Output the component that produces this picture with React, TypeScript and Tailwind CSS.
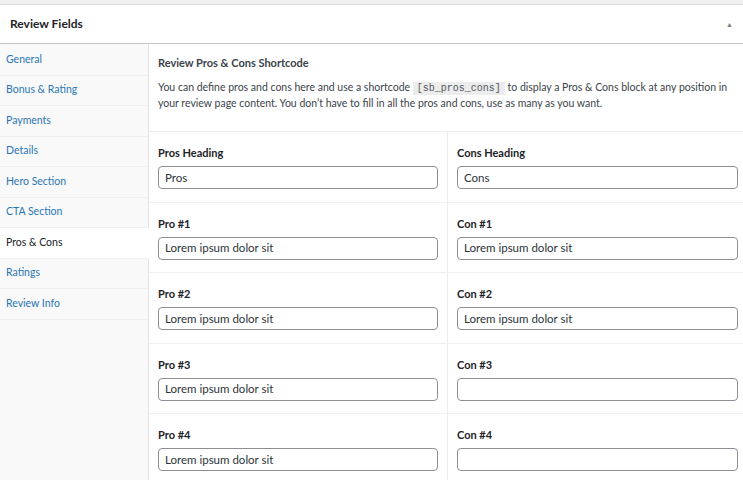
import React from "react";

const tabs = [
  "General",
  "Bonus & Rating",
  "Payments",
  "Details",
  "Hero Section",
  "CTA Section",
  "Pros & Cons",
  "Ratings",
  "Review Info",
];

const rows: { l: string; lv: string; r: string; rv: string }[] = [
  { l: "Pros Heading", lv: "Pros", r: "Cons Heading", rv: "Cons" },
  { l: "Pro #1", lv: "Lorem ipsum dolor sit", r: "Con #1", rv: "Lorem ipsum dolor sit" },
  { l: "Pro #2", lv: "Lorem ipsum dolor sit", r: "Con #2", rv: "Lorem ipsum dolor sit" },
  { l: "Pro #3", lv: "Lorem ipsum dolor sit", r: "Con #3", rv: "" },
  { l: "Pro #4", lv: "Lorem ipsum dolor sit", r: "Con #4", rv: "" },
];

function Field({ label, value, right }: { label: string; value: string; right?: boolean }) {
  return (
    <div
      className={
        "w-1/2 px-[9px] pt-[14px] pb-[12.5px] " + (right ? "" : "border-r border-[#ececec]")
      }
    >
      <div className="text-[11px] leading-[13px] font-bold text-[#1d2327]">{label}</div>
      <div className="mt-[7px] h-[23px] rounded-[4px] border border-[#8c8f94] bg-white px-[6px] flex items-center text-[11.5px] text-[#2c3338]">
        {value}
      </div>
    </div>
  );
}

export default function App() {
  return (
    <div
      className="w-[743px] h-[480px] overflow-hidden bg-[#f0f0f1] pt-[4px]"
      style={{ fontFamily: "Lato, 'Noto Sans', sans-serif" }}
    >
      <div className="w-[747px] h-[476px] bg-white border-t border-[#dcdcde] flex flex-col">
        <div className="h-[39px] shrink-0 flex items-center justify-between pl-[10px] pr-[14px] border-b border-[#c3c4c7]">
          <div className="text-[12px] font-bold text-[#1d2327]">Review Fields</div>
          <div className="text-[7px] text-[#787c82] leading-none">▲</div>
        </div>
        <div className="flex flex-1 min-h-0">
          <div className="w-[149px] shrink-0 bg-[#f9f9f9] border-r border-[#e5e5e5] pt-[1px]">
            {tabs.map((t) => (
              <div
                key={t}
                className={
                  "h-[30.5px] flex items-center pl-[6px] border-b border-[#efefef] text-[10.5px] " +
                  (t === "Pros & Cons" ? "bg-white text-[#1d2327] mr-[-1px]" : "text-[#2a76b5]")
                }
              >
                {t}
              </div>
            ))}
          </div>
          <div className="flex-1 min-w-0">
            <div className="px-[9px] pt-[12px] pb-[20px] border-b border-[#ececec]">
              <div className="text-[11px] font-bold text-[#3c434a] leading-[13px]">
                Review Pros &amp; Cons Shortcode
              </div>
              <p className="mt-[11px] text-[10.5px] leading-[15px] text-[#3c434a] whitespace-nowrap">
                You can define pros and cons here and use a shortcode{" "}
                <code
                  className="bg-[#ececec] px-[4px] py-[1px] text-[10px] text-[#50575e]"
                  style={{ fontFamily: "'Liberation Mono', monospace" }}
                >
                  [sb_pros_cons]
                </code>{" "}
                to display a Pros &amp; Cons block at any position in
                <br />
                your review page content. You don’t have to fill in all the pros and cons, use as
                many as you want.
              </p>
            </div>
            {rows.map((r) => (
              <div key={r.l} className="flex border-b border-[#f0f0f0]">
                <Field label={r.l} value={r.lv} />
                <Field label={r.r} value={r.rv} right />
              </div>
            ))}
          </div>
        </div>
      </div>
    </div>
  );
}
